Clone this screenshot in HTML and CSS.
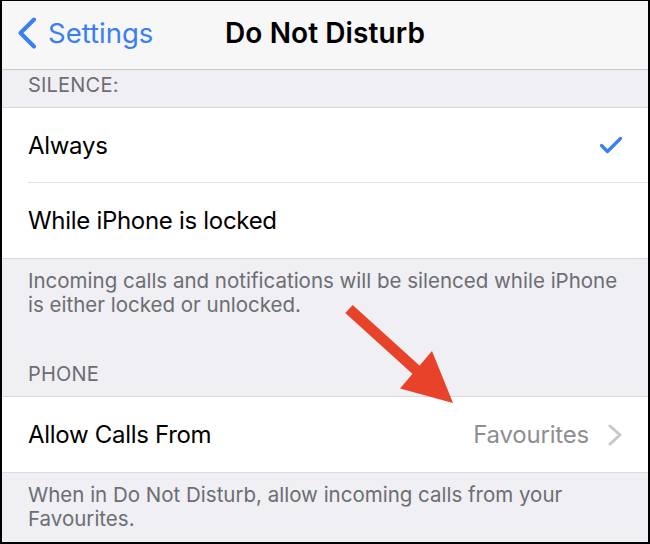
FILE: index.html
```html
<!DOCTYPE html>
<html>
<head>
<meta charset="utf-8">
<link rel="stylesheet" href="styles.css">
</head>
<body>
<div class="screen">
  <header class="nav">
    <div class="back">
      <svg class="back-icon" width="22" height="32" viewBox="0 0 22 32"><polyline points="18,2.5 4.5,16 18,29.5" fill="none" stroke="#3a7ef6" stroke-width="4" stroke-linecap="round" stroke-linejoin="round"/></svg>
      <span class="back-text">Settings</span>
    </div>
    <div class="title">Do Not Disturb</div>
    <div></div>
  </header>

  <div class="sec-header first">SILENCE:</div>
  <div class="group">
    <div class="row">
      <div class="row-inner">
        <span class="label">Always</span>
        <svg class="check" width="24" height="19" viewBox="0 0 24 19"><polyline points="2.5,9.5 8.5,15.5 21.5,2.5" fill="none" stroke="#3a7ef6" stroke-width="3.2" stroke-linecap="round" stroke-linejoin="round"/></svg>
      </div>
    </div>
    <div class="row">
      <div class="row-inner">
        <span class="label">While iPhone is locked</span>
      </div>
    </div>
  </div>
  <div class="footer">Incoming calls and notifications will be silenced while iPhone is either locked or unlocked.</div>

  <div class="sec-header">PHONE</div>
  <div class="group">
    <div class="row">
      <div class="row-inner">
        <span class="label">Allow Calls From</span>
        <span class="value">Favourites</span>
        <svg class="chevron" width="16" height="22" viewBox="0 0 16 22"><polyline points="3,2 13,11 3,20" fill="none" stroke="#c7c7cc" stroke-width="3" stroke-linecap="round" stroke-linejoin="round"/></svg>
      </div>
    </div>
  </div>
  <div class="footer">When in Do Not Disturb, allow incoming calls from your Favourites.</div>

  <svg class="arrow" width="650" height="544" viewBox="0 0 650 544">
    <line x1="349" y1="309" x2="424" y2="377" stroke="#e8432a" stroke-width="11"/>
    <polygon points="432,351 400,388.5 453,403" fill="#e8432a"/>
  </svg>
</div>
</body>
</html>
```

FILE: styles.css
```css
html, body {
  margin: 0;
  padding: 0;
  background: #efeff4;
}

.screen {
  position: relative;
  width: 650px;
  height: 544px;
  box-sizing: border-box;
  border: 2px solid #000;
  border-top-width: 1px;
  background: #efeff4;
  overflow: hidden;
  font-family: Inter, "Noto Sans", sans-serif;
  color: #000;
}

.nav {
  box-sizing: border-box;
  height: 69px;
  padding-top: 16px;
  border-bottom: 1px solid #c9c9ce;
  background: #f7f7f8;
  display: grid;
  grid-template-columns: 1fr auto 1fr;
  align-items: start;
}

.back {
  display: flex;
  align-items: center;
  padding-left: 14px;
  gap: 10px;
  height: 32px;
}

.back-icon {
  display: block;
}

.back-text {
  font-size: 27.5px;
  line-height: 32px;
  color: #3a7ef6;
}

.title {
  font-size: 28px;
  line-height: 32px;
  font-weight: 600;
  letter-spacing: 0.1px;
}

.sec-header {
  padding: 3px 26px 10px;
  font-size: 20px;
  line-height: 24px;
  color: #6d6d72;
  letter-spacing: 0.2px;
}

.group {
  background: #fff;
  border-top: 1px solid #d9d9de;
  border-bottom: 1px solid #d9d9de;
}

.row {
  padding-left: 26px;
}

.row-inner {
  height: 74px;
  display: flex;
  align-items: center;
  padding-right: 25px;
  border-bottom: 1px solid #e1e1e4;
}

.row:last-child .row-inner {
  border-bottom: none;
  height: 75px;
}

.label {
  flex: 1;
  font-size: 24px;
  letter-spacing: -0.3px;
}

.value {
  font-size: 24px;
  color: #8e8e93;
  letter-spacing: -0.2px;
  margin-right: 18px;
}

.check, .chevron {
  display: block;
}

.footer {
  padding: 10px 20px 42px 26px;
  font-size: 20.5px;
  line-height: 24px;
  color: #6d6d72;
}

.arrow {
  position: absolute;
  left: -2px;
  top: -1px;
  pointer-events: none;
}
```
